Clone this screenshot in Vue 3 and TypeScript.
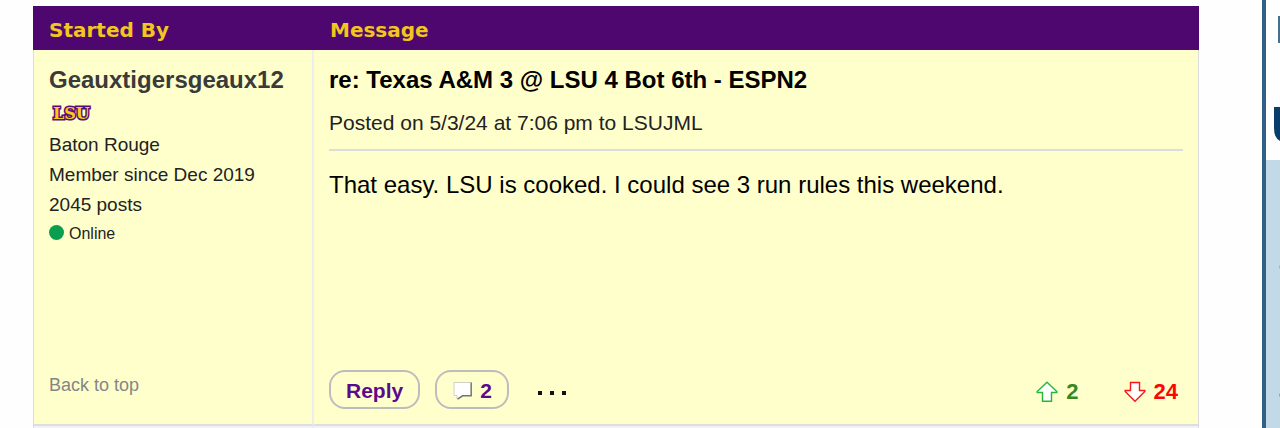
<script setup lang="ts">
interface Post {
  author: string
  location: string
  joined: string
  posts: number
  title: string
  meta: string
  body: string
  replies: number
  up: number
  down: number
}

const post: Post = {
  author: 'Geauxtigersgeaux12',
  location: 'Baton Rouge',
  joined: 'Member since Dec 2019',
  posts: 2045,
  title: 're: Texas A&M 3 @ LSU 4 Bot 6th - ESPN2',
  meta: 'Posted on 5/3/24 at 7:06 pm to LSUJML',
  body: 'That easy. LSU is cooked. I could see 3 run rules this weekend.',
  replies: 2,
  up: 2,
  down: 24,
}
</script>

<template>
  <div class="page">
    <main class="thread">
      <table class="posts">
        <thead>
          <tr>
            <th class="who" scope="col">Started By</th>
            <th scope="col">Message</th>
          </tr>
        </thead>
        <tbody>
          <tr>
            <td class="who">
              <div class="cell">
                <a class="author" href="#">{{ post.author }}</a>
                <svg class="team" width="46" height="18" viewBox="0 0 46 18" role="img" aria-label="LSU">
                  <text x="4" y="15">LSU</text>
                </svg>
                <span class="fact">{{ post.location }}</span>
                <span class="fact">{{ post.joined }}</span>
                <span class="fact">{{ post.posts }} posts</span>
                <span class="online"><i class="dot"></i>Online</span>
                <a class="top" href="#">Back to top</a>
              </div>
            </td>
            <td class="message">
              <div class="cell">
                <h2 class="title">{{ post.title }}</h2>
                <div class="meta">{{ post.meta }}</div>
                <p class="body">{{ post.body }}</p>
                <div class="actions">
                  <button class="pill" type="button">Reply</button>
                  <button class="pill count" type="button" aria-label="2 replies">
                    <svg width="22" height="22" viewBox="0 0 22 22" aria-hidden="true">
                      <path d="M2 2.5H19V15.5H10.5L5 19V15.5H2Z" fill="#fff" stroke="#c4c4bc" stroke-width=".8" />
                      <path d="M19.2 2.5V15.8H10.6L5.6 19.2" fill="none" stroke="#757570" stroke-width="1.4" />
                    </svg>
                    {{ post.replies }}
                  </button>
                  <button class="more" type="button" aria-label="More options">
                    <svg width="32" height="6" viewBox="0 0 32 6" aria-hidden="true">
                      <path d="M1 1H5V5H1ZM13 1H17V5H13ZM25 1H29V5H25Z" fill="#111" />
                    </svg>
                  </button>
                  <div class="votes">
                    <button class="vote up" type="button" aria-label="Upvote">
                      <svg width="22" height="22" viewBox="0 0 22 22" aria-hidden="true">
                        <path d="M11 1.2L20.8 10.5V11.5H15.5V20.3H6.5V11.5H1.2V10.5Z" />
                      </svg>
                      {{ post.up }}
                    </button>
                    <button class="vote down" type="button" aria-label="Downvote">
                      <svg width="22" height="22" viewBox="0 0 22 22" aria-hidden="true">
                        <path d="M11 20.3L20.8 10.5V9.5H15.5V1.5H6.5V9.5H1.2V10.5Z" />
                      </svg>
                      {{ post.down }}
                    </button>
                  </div>
                </div>
              </div>
            </td>
          </tr>
          <tr class="next">
            <td class="who"></td>
            <td class="message"></td>
          </tr>
        </tbody>
      </table>
    </main>
    <aside class="rail">
      <div class="head">
        <svg width="14" height="160" viewBox="0 0 14 160" aria-hidden="true">
          <path d="M12 16H14V43H12Z" fill="#47708f" />
          <path d="M8 107H14V141Q8 138 8 128Z" fill="#063d6b" />
        </svg>
      </div>
      <svg width="14" height="268" viewBox="0 0 14 268" aria-hidden="true">
        <circle cx="15" cy="107" r="2" fill="#8fb3c8" />
        <circle cx="15" cy="235" r="2" fill="#7fa6ab" />
      </svg>
    </aside>
  </div>
</template>

<style>
body {
  margin: 0;
  background: #fefefe;
  overflow: hidden;
}
</style>

<style scoped>
.page {
  display: flex;
  gap: 63px;
  padding-left: 33px;
  font-family: "Liberation Sans", Arial, sans-serif;
  color: #222;
}
.thread {
  flex: 1;
  padding-top: 6px;
}
.posts {
  width: 100%;
  border-collapse: separate;
  border-spacing: 0;
  table-layout: fixed;
}
th {
  height: 44px;
  padding: 4px 16px 0;
  background: #4f0770;
  color: #f1c61f;
  text-align: left;
  font: bold 20px/24px "DejaVu Sans", Verdana, sans-serif;
  box-sizing: border-box;
}
.who {
  width: 281px;
  box-sizing: border-box;
}
td {
  padding: 0 15px;
  background: #ffffcc;
  border-bottom: 2px solid #dedede;
  vertical-align: top;
}
td.who {
  border-left: 1px solid #dcdcdc;
  border-right: 2px solid #ededeb;
}
td.message {
  border-right: 1px solid #dcdcdc;
}
.cell {
  display: flex;
  flex-direction: column;
  align-items: flex-start;
  box-sizing: border-box;
  min-height: 374px;
  padding: 16px 0 15px;
}
a {
  text-decoration: none;
}
.author {
  font-weight: bold;
  font-size: 24px;
  line-height: 28px;
  color: #3a3a3a;
}
.team {
  margin: 10px 0 8px;
}
.team text {
  font: bold 16px "DejaVu Serif", serif;
  fill: #fdc81c;
  stroke: #551077;
  stroke-width: 3px;
  paint-order: stroke;
  stroke-linejoin: miter;
}
.fact {
  font-size: 19px;
  line-height: 30px;
}
.online {
  display: flex;
  align-items: center;
  gap: 5px;
  font-size: 16px;
  line-height: 28px;
}
.dot {
  width: 15px;
  height: 15px;
  margin-bottom: 4px;
  border-radius: 50%;
  background: #0a9f50;
}
.top {
  margin-top: auto;
  margin-bottom: 12px;
  font-size: 18px;
  line-height: 24px;
  color: #858585;
}
.title {
  margin: 0;
  font-size: 24px;
  line-height: 28px;
  color: #000;
}
.meta {
  align-self: stretch;
  margin-top: 16px;
  padding-bottom: 13px;
  font-size: 21px;
  line-height: 26px;
  border-bottom: 2px solid #dcdcdc;
}
.body {
  margin: 20px 0 0;
  font-size: 24px;
  line-height: 28px;
  color: #000;
}
.actions {
  display: flex;
  align-items: center;
  align-self: stretch;
  margin-top: auto;
}
button {
  display: flex;
  align-items: center;
  padding: 0;
  border: 0;
  background: none;
  font: bold 22px/26px "Liberation Sans", Arial, sans-serif;
}
.pill {
  height: 39px;
  padding: 2px 15px 0;
  border: 2px solid #bdbdbd;
  border-radius: 16px;
  font-size: 21px;
  color: #5c0a8c;
}
.count {
  margin-left: 15px;
  gap: 6px;
}
.more {
  margin-left: 28px;
  padding-top: 6px;
}
.votes {
  display: flex;
  gap: 45px;
  margin-left: auto;
  padding-top: 5px;
  padding-right: 5px;
}
.vote {
  gap: 8px;
}
.vote path {
  fill: #fff;
  stroke-width: 1.4;
}
.up {
  color: #37891f;
}
.up path {
  stroke: #22b73c;
}
.down {
  color: #fb0505;
}
.down path {
  stroke: #fb1515;
}
.next td {
  height: 20px;
  background: #f2f2f2;
}
.rail {
  flex: none;
  width: 14px;
  height: 100vh;
  overflow: hidden;
  border-left: 4px solid #335f87;
  background: #c2d9e7;
}
.head {
  height: 160px;
  background: #fefefe;
}
.rail svg {
  display: block;
}
</style>
